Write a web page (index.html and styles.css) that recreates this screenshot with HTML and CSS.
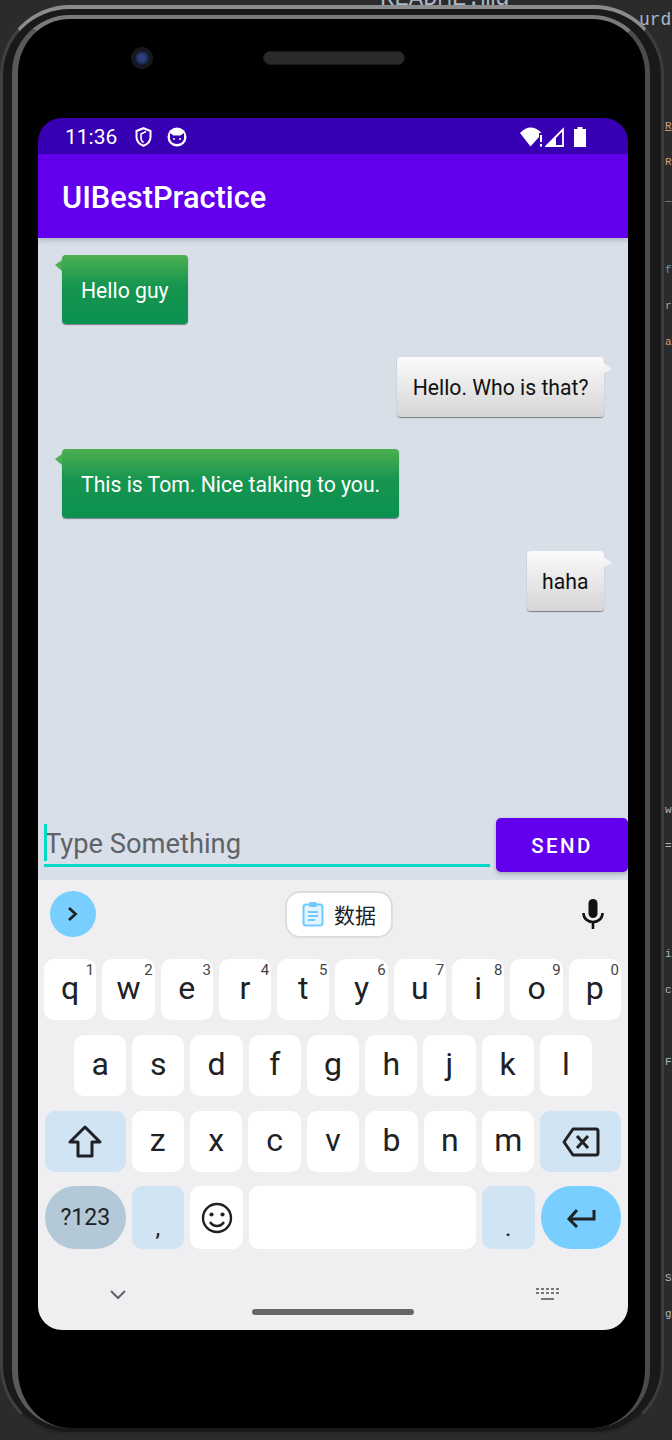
FILE: index.html
```html
<!DOCTYPE html>
<html lang="en">
<head>
    <meta charset="UTF-8">
    <title>UIBestPractice</title>
    <link rel="stylesheet" href="styles.css">
</head>
<body>
    <!-- bits of the editor window behind the emulator -->
    <div class="ide-tab">README.md</div>
    <div class="ide-corner">urd</div>
    <div class="ide-gutter">
        <div class="orange under">R</div>
        <div class="orange">R</div>
        <div class="orange">_</div>
        <div>&nbsp;</div>
        <div class="blue">f</div>
        <div class="orange">r</div>
        <div class="orange">a</div>
    </div>
    <div class="ide-gutter ide-gutter-low">
        <div>w</div>
        <div>=</div>
        <div>&nbsp;</div>
        <div>&nbsp;</div>
        <div>i</div>
        <div>c</div>
        <div>&nbsp;</div>
        <div>F</div>
        <div>&nbsp;</div>
        <div>&nbsp;</div>
        <div>&nbsp;</div>
        <div>&nbsp;</div>
        <div>&nbsp;</div>
        <div>S</div>
        <div>g</div>
    </div>

    <div class="phone">
        <div class="bezel">
            <div class="bezel-top">
                <div class="camera"></div>
                <div class="speaker"></div>
            </div>
            <div class="screen">
                <div class="status-bar">
                    <span class="clock">11:36</span>
                    <svg width="17" height="20" viewBox="0 0 17 20"><path d="M8.500 1.200 15.500 4v6c0 4-3 7.200-7 8.800C4.500 17.200 1.500 14 1.500 10V4z" fill="none" stroke="#fff" stroke-width="2"/><path d="M11 4.500 6 7v4.500c0 1.500 1 3 2.500 4" fill="none" stroke="#fff" stroke-width="1.600"/></svg>
                    <svg width="20" height="20" viewBox="0 0 20 20"><circle cx="10" cy="10" r="9.500" fill="#fff"/><path d="M3 11V6l3.500 2.500h7L17 6v5c0 3-3 6-7 6s-7-3-7-6z" fill="#3700b3"/><circle cx="7" cy="12" r="1" fill="#fff"/><circle cx="13" cy="12" r="1" fill="#fff"/></svg>
                    <div class="status-right">
                        <svg width="22" height="20" viewBox="0 0 22 20"><path d="M0 6C3 2.500 7 .500 10.500 .500S18 2 21.500 6h-2.500v4L10.500 19.500z" fill="#fff"/><rect x="20" y="8" width="2" height="7" fill="#fff"/><rect x="20" y="17" width="2" height="2.500" fill="#fff"/></svg>
                        <svg width="19" height="20" viewBox="0 0 19 20"><path d="M1.500 19 18 2.500V19z" fill="none" stroke="#fff" stroke-width="1.800"/><path d="M1.500 19 11 9.500V19z" fill="#fff"/></svg>
                        <svg class="battery" width="12" height="20" viewBox="0 0 12 20"><path d="M3.500 0h5v2H12v18H0V2h3.500z" fill="#fff"/></svg>
                    </div>
                </div>
                <header class="app-bar">UIBestPractice</header>

                <main class="chat">
                    <div class="messages">
                        <div class="msg msg-in">Hello guy</div>
                        <div class="msg msg-out">Hello. Who is that?</div>
                        <div class="msg msg-in">This is Tom. Nice talking to you.</div>
                        <div class="msg msg-out">haha</div>
                    </div>
                    <div class="input-row">
                        <div class="input-box"><span class="caret"></span>Type Something</div>
                        <div class="send-btn">SEND</div>
                    </div>
                </main>

                <section class="keyboard">
                    <div class="suggest-row">
                        <div class="expand-btn">
                            <svg width="14" height="16" viewBox="0 0 14 16"><path d="M3 2l6.500 6L3 14" fill="none" stroke="#202124" stroke-width="2.800"/></svg>
                        </div>
                        <div class="chip">
                            <svg width="22" height="26" viewBox="0 0 22 26"><rect x="1.500" y="3.500" width="19" height="21" rx="2.500" fill="#e3f4ff" stroke="#6fcbff" stroke-width="2"/><rect x="7" y="1" width="8" height="5" rx="1.500" fill="#6fcbff"/><path d="M6 11h10M6 15h10M6 19h7" stroke="#6fcbff" stroke-width="2"/></svg>
                            <span>数据</span>
                        </div>
                        <svg class="mic" width="22" height="30" viewBox="0 0 22 30"><rect x="6.500" y="0" width="9" height="19" rx="4.500" fill="#111"/><path d="M1.500 14c0 5.500 4 9 9.500 9s9.500-3.500 9.500-9" fill="none" stroke="#111" stroke-width="2.600"/><rect x="9.700" y="22" width="2.600" height="8" fill="#111"/></svg>
                    </div>

                    <div class="key-row">
                        <div class="key">q<sup>1</sup></div>
                        <div class="key">w<sup>2</sup></div>
                        <div class="key">e<sup>3</sup></div>
                        <div class="key">r<sup>4</sup></div>
                        <div class="key">t<sup>5</sup></div>
                        <div class="key">y<sup>6</sup></div>
                        <div class="key">u<sup>7</sup></div>
                        <div class="key">i<sup>8</sup></div>
                        <div class="key">o<sup>9</sup></div>
                        <div class="key">p<sup>0</sup></div>
                    </div>
                    <div class="key-row key-row-home">
                        <div class="key">a</div>
                        <div class="key">s</div>
                        <div class="key">d</div>
                        <div class="key">f</div>
                        <div class="key">g</div>
                        <div class="key">h</div>
                        <div class="key">j</div>
                        <div class="key">k</div>
                        <div class="key">l</div>
                    </div>
                    <div class="key-row key-row-wide">
                        <div class="key key-wide key-blue">
                            <svg width="36" height="34" viewBox="0 0 36 34"><path d="M18 2 33 17h-8v14H11V17H3z" fill="none" stroke="#202124" stroke-width="3" stroke-linejoin="round"/></svg>
                        </div>
                        <div class="key">z</div>
                        <div class="key">x</div>
                        <div class="key">c</div>
                        <div class="key">v</div>
                        <div class="key">b</div>
                        <div class="key">n</div>
                        <div class="key">m</div>
                        <div class="key key-wide key-blue">
                            <svg width="38" height="30" viewBox="0 0 38 30"><path d="M11 2h23a2 2 0 0 1 2 2v22a2 2 0 0 1-2 2H11L2 15z" fill="none" stroke="#202124" stroke-width="3" stroke-linejoin="round"/><path d="M15 9l11 12M26 9 15 21" stroke="#202124" stroke-width="3"/></svg>
                        </div>
                    </div>
                    <div class="key-row key-row-wide key-row-last">
                        <div class="key key-wide key-sym">?123</div>
                        <div class="key key-blue key-punct">,</div>
                        <div class="key key-emoji">
                            <svg width="32" height="32" viewBox="0 0 32 32"><circle cx="16" cy="16" r="14" fill="none" stroke="#202124" stroke-width="2.400"/><circle cx="10.500" cy="12.500" r="2.100" fill="#202124"/><circle cx="21.500" cy="12.500" r="2.100" fill="#202124"/><path d="M9 20c2 3 4.500 4 7 4s5-1 7-4" fill="none" stroke="#202124" stroke-width="2.400"/></svg>
                        </div>
                        <div class="key key-space"></div>
                        <div class="key key-blue key-punct">.</div>
                        <div class="key key-wide key-enter">
                            <svg width="30" height="20" viewBox="0 0 30 20"><path d="M28 2v9H4M11 2 3 11l8 8" fill="none" stroke="#202124" stroke-width="3"/></svg>
                        </div>
                    </div>

                    <div class="nav-row">
                        <svg width="16" height="10" viewBox="0 0 16 10"><path d="M1 1l7 7 7-7" fill="none" stroke="#5f6368" stroke-width="2"/></svg>
                        <div class="home-pill"></div>
                        <svg class="kbd-icon" width="24" height="14" viewBox="0 0 24 14"><path d="M0 1h3M5 1h3M10 1h3M15 1h3M20 1h3M0 5h3M5 5h3M10 5h3M15 5h3M20 5h3" stroke="#777" stroke-width="2"/><path d="M5 11h13" stroke="#777" stroke-width="2"/></svg>
                    </div>
                </section>
            </div>
        </div>
    </div>
</body>
</html>
```
FILE: styles.css
```css
/* Page */
body {
    position: relative;
    margin: 0;
    width: 672px;
    height: 1440px;
    overflow: hidden;
    background-color: #2b2b2b;
    font-family: 'Roboto', 'Noto Sans CJK SC', sans-serif;
    color: #202124;
}

/* Editor behind the emulator */
.ide-tab, .ide-corner, .ide-gutter {
    position: absolute;
    font-family: 'Liberation Mono', monospace;
    color: #a9b7c6;
    white-space: nowrap;
}
.ide-tab { left: 380px; top: -15px; font-size: 24px; }
.ide-corner { left: 639px; top: 10px; font-size: 18px; }
.ide-gutter {
    left: 665px;
    top: 108px;
    font-size: 11px;
    line-height: 36px;
}
.ide-gutter-low { top: 792px; }
.orange { color: #cc9d80; }
.blue { color: #5d97c9; }
.under { text-decoration: underline; }

/* Device frame */
.phone {
    position: relative;
    box-sizing: border-box;
    width: 664px;
    height: 1430px;
    margin-top: 5px;
    padding: 6px 11px 4px 9px;
    background-color: #191919;
    border-style: solid;
    border-width: 4px 3px 3px 3px;
    border-color: #8c8c8c #3c3c3c #262626 #404040;
    border-radius: 70px;
}
.bezel {
    box-sizing: border-box;
    height: 100%;
    padding: 0 17px 0 20px;
    background-color: #000;
    border-style: solid;
    border-width: 4px 5px 0 6px;
    border-color: #7a7a7a #4c4c4c #000 #5a5a5a;
    border-radius: 58px;
}
.bezel-top {
    box-sizing: border-box;
    display: flex;
    align-items: flex-start;
    height: 99px;
    padding-top: 28px;
}
.camera {
    box-sizing: border-box;
    width: 22px;
    height: 22px;
    margin-left: 93px;
    border-radius: 50%;
    background: radial-gradient(circle, #2c3f78 22%, #10162b 48%, #171717 60%);
}
.speaker {
    box-sizing: border-box;
    width: 142px;
    height: 14px;
    margin: 4px 0 0 110px;
    border-radius: 7px;
    background-color: #2a2a2a;
    border: 1px solid #1a1a1a;
}
.screen {
    width: 590px;
    height: 1212px;
    border-radius: 24px;
    overflow: hidden;
    display: flex;
    flex-direction: column;
}

/* Status + app bar */
.status-bar {
    display: flex;
    align-items: center;
    gap: 15px;
    height: 36px;
    padding: 2px 42px 0 27px;
    box-sizing: border-box;
    background-color: #3700b3;
    color: #fff;
}
.clock { font-size: 21px; margin-right: 3px; }
.status-right {
    display: flex;
    align-items: center;
    gap: 3px;
    margin-left: auto;
}
.battery { margin-left: 7px; }
.app-bar {
    position: relative;
    box-sizing: border-box;
    height: 84px;
    line-height: 80px;
    padding: 4px 0 0 24px;
    background-color: #6200ee;
    color: #fff;
    font-size: 30.800px;
    font-weight: 500;
    box-shadow: 0 2px 5px rgba(0, 0, 0, 0.2);
}

/* Chat */
.chat {
    flex: 0 0 642px;
    display: flex;
    flex-direction: column;
    background-color: #d8dfe9;
}
.messages {
    flex: 1;
    display: flex;
    flex-direction: column;
    padding: 17px 24px 0;
}
.msg {
    position: relative;
    font-size: 21.200px;
    border-radius: 4px;
}
.msg-in {
    align-self: flex-start;
    margin-bottom: 33px;
    padding: 2px 19px 0;
    line-height: 67px;
    color: #fff;
    background: linear-gradient(#4caf50, #16954f 45%, #0b9150);
    box-shadow: 0 1px 1px rgba(60, 60, 80, 0.6);
}
.msg-in::before {
    content: "";
    position: absolute;
    left: -7px;
    top: 5px;
    border-style: solid;
    border-width: 5px 7px 6px 0;
    border-color: transparent #4caf50 transparent transparent;
}
.msg-out {
    align-self: flex-end;
    margin-bottom: 32px;
    padding: 2px 15.500px 0;
    line-height: 58px;
    color: #111;
    background: linear-gradient(#fbfbfb, #d5d5d5);
    box-shadow: 0 1px 1px rgba(60, 60, 60, 0.6);
}
.msg-out::after {
    content: "";
    position: absolute;
    right: -8px;
    top: 6px;
    border-style: solid;
    border-width: 6px 0 4px 8px;
    border-color: transparent transparent transparent #f2f2f2;
}

/* Input row */
.input-row {
    display: flex;
    align-items: flex-start;
    gap: 6px;
    height: 62px;
    padding-left: 6px;
}
.input-box {
    position: relative;
    flex: 1;
    box-sizing: border-box;
    height: 49px;
    line-height: 52px;
    padding-left: 1px;
    font-size: 27.300px;
    color: #5f6368;
    border-bottom: 3px solid #00d8c8;
}
.caret {
    position: absolute;
    left: 0;
    top: 6px;
    width: 3px;
    height: 37px;
    background-color: #00d8c8;
}
.send-btn {
    width: 132px;
    height: 54px;
    line-height: 56px;
    text-align: center;
    background-color: #6200ee;
    color: #fff;
    font-size: 20.500px;
    font-weight: 500;
    letter-spacing: 2.400px;
    border-radius: 5px;
    box-shadow: 0 2px 4px rgba(0, 0, 0, 0.25);
}

/* Keyboard */
.keyboard {
    position: relative;
    flex: 1;
    display: flex;
    flex-direction: column;
    background-color: #efeff2;
    padding: 0 7px 0 6px;
}
.suggest-row {
    display: flex;
    align-items: center;
    justify-content: space-between;
    height: 79px;
    padding: 0 17px 0 6px;
}
.expand-btn {
    width: 46px;
    height: 46px;
    margin-top: -11px;
    border-radius: 50%;
    background-color: #78cfff;
    display: flex;
    align-items: center;
    justify-content: center;
}
.chip {
    box-sizing: border-box;
    width: 108px;
    height: 47px;
    margin-top: -11px;
    display: flex;
    align-items: center;
    justify-content: center;
    gap: 10px;
    font-size: 21px;
    color: #202124;
    background-color: #fff;
    border: 2px solid #dcdcdc;
    border-radius: 15px;
}
.mic { margin-top: -11px; }

.key-row {
    display: flex;
    gap: 6px;
    height: 61px;
    margin-bottom: 15px;
}
.key-row-home { padding: 0 29px 0 30px; }
.key-row-wide { padding-left: 1px; }
.key-row-last { height: 63px; margin-bottom: 0; margin-top: -1px; }
.key {
    position: relative;
    box-sizing: border-box;
    flex: 1 1 0;
    display: flex;
    align-items: center;
    justify-content: center;
    padding-bottom: 3px;
    background-color: #fff;
    border-radius: 10px;
    font-size: 32px;
    color: #202124;
}
.key sup {
    position: absolute;
    top: 4px;
    right: 2px;
    font-size: 15px;
    line-height: 1;
    color: #444;
}
.key-wide { flex: 0 0 80.500px; padding-bottom: 0; }
.key-emoji { padding-bottom: 0; }
.key-blue { background-color: #d0e4f4; }
.key-punct { align-items: flex-end; padding-bottom: 7px; font-size: 24px; }
.key-sym {
    background-color: #b4c9d7;
    border-radius: 31px;
    font-size: 23px;
}
.key-enter {
    background-color: #78cfff;
    border-radius: 31px;
}
.key-space { flex: 0 0 227px; }

/* Bottom nav */
.nav-row {
    flex: 1;
    display: flex;
    align-items: flex-start;
    justify-content: space-between;
    padding: 41px 61px 0 66px;
}
.kbd-icon { margin-top: -2px; }
.home-pill {
    position: absolute;
    left: 214px;
    top: 429px;
    width: 162px;
    height: 6px;
    border-radius: 3px;
    background-color: #666;
}
```
